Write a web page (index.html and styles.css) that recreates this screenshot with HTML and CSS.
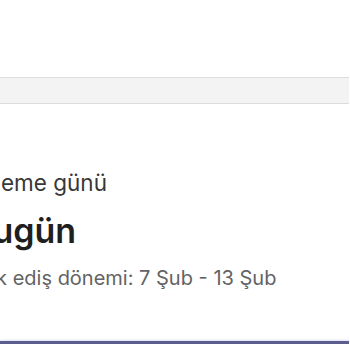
FILE: index.html
```html
<!DOCTYPE html>
<html lang="tr">
<head>
<meta charset="utf-8">
<link rel="stylesheet" href="styles.css">
</head>
<body>
<div class="page">
  <div class="top"></div>
  <div class="bar"></div>
  <div class="card">
    <div class="label">Ödeme günü</div>
    <div class="value">Bugün</div>
    <div class="period">Hak ediş dönemi: 7 Şub - 13 Şub</div>
  </div>
  <div class="line"></div>
</div>
</body>
</html>
```
FILE: styles.css
```css
html, body {
  margin: 0;
  padding: 0;
  background: #ffffff;
  overflow: hidden;
}
.page {
  width: 349px;
  font-family: Inter, "Noto Sans", sans-serif;
}
.top {
  height: 77px;
}
.bar {
  height: 25px;
  background: #f3f3f3;
  border-top: 1px solid #dedede;
  border-bottom: 1px solid #dcdcdc;
}
.card {
  height: 237px;
  padding-top: 65px;
  box-sizing: border-box;
  margin-left: -30px;
  display: flex;
  flex-direction: column;
  white-space: nowrap;
}
.label {
  font-size: 22.5px;
  color: #383838;
  line-height: 28px;
}
.value {
  font-size: 34px;
  font-weight: 600;
  color: #1f1f1f;
  line-height: 40px;
  margin-top: 14px;
}
.period {
  font-size: 20px;
  color: #636363;
  line-height: 24px;
  margin-top: 15px;
}
.line {
  height: 3px;
  background: #5b5e8c;
  box-shadow: 0 -1px 2px rgba(120, 130, 220, 0.25);
}
```
